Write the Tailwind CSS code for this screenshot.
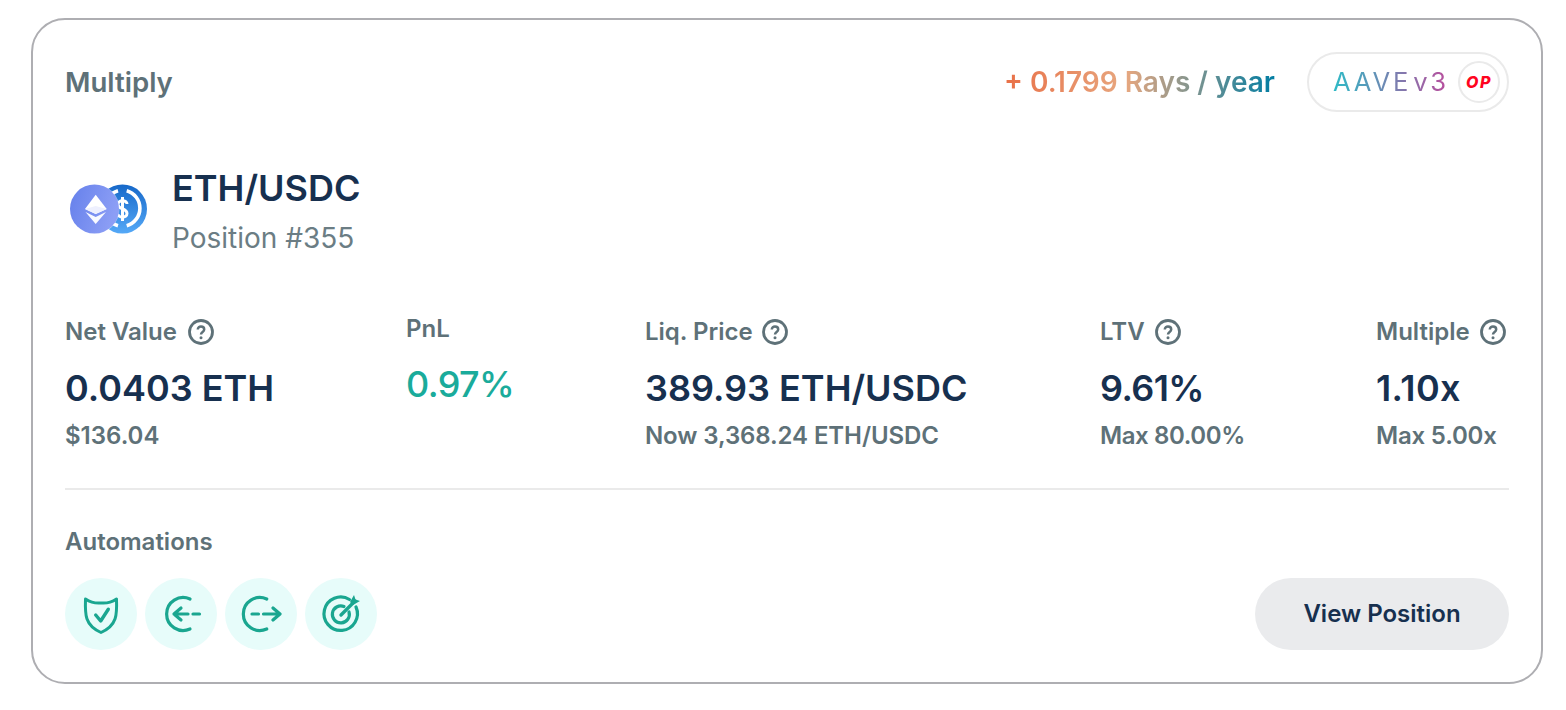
<!DOCTYPE html>
<html>
<head>
<meta charset="utf-8">
<script src="https://cdn.jsdelivr.net/npm/@tailwindcss/browser@4"></script>
</head>
<body class="bg-white font-['Inter',sans-serif]">
<div class="w-[1566px] h-[710px] pt-[18px] pl-[31px]">
  <div class="w-[1512px] h-[666px] rounded-[34px] border-2 border-[#aeaeb2] px-[32px] pt-[32px] text-[#5e7178] flex flex-col">
    <!-- header -->
    <div class="flex items-center justify-between h-[60px]">
      <div class="text-[27.600px] font-semibold mt-[2px]">Multiply</div>
      <div class="flex items-center">
        <div class="text-[28px] font-semibold text-transparent bg-clip-text bg-[linear-gradient(90deg,#e97047_0%,#e7a77f_45%,#007da3_100%)]">+ 0.1799 Rays / year</div>
        <div class="ml-[32px] w-[202px] h-[60px] rounded-full border-2 border-[#eaeaea] flex items-center pl-[24px]">
          <span class="w-[112px] text-[25.600px] leading-none font-normal tracking-[2.800px] [word-spacing:-8px] whitespace-nowrap text-transparent bg-clip-text bg-[linear-gradient(90deg,#2ebac6_0%,#b6509e_100%)]">AAVE v3</span>
          <div class="ml-[13px] w-[42px] h-[42px] rounded-full border-2 border-[#eaeaea] flex items-center justify-center text-[16px] font-extrabold italic tracking-[1.500px] text-[#ff0420]">OP</div>
        </div>
      </div>
    </div>
    <!-- token -->
    <div class="flex mt-[57px] h-[90px]">
      <svg class="w-[78px] h-[50px] ml-[5px] mt-[15px]" viewBox="0 0 78 50">
        <defs>
          <linearGradient id="u" x1="0" y1="0" x2="0" y2="1"><stop offset="0" stop-color="#1668c9"/><stop offset="1" stop-color="#55a9f7"/></linearGradient>
          <linearGradient id="e" x1="0" y1="0" x2="1" y2="0.3"><stop offset="0" stop-color="#6580eb"/><stop offset="1" stop-color="#8c9ef5"/></linearGradient>
        </defs>
        <circle cx="52.500" cy="25" r="24.500" fill="url(#u)"/>
        <path d="M56.700 6.700A18.200 18.200 0 0 1 56.700 41.700" fill="none" stroke="#fff" stroke-width="3.600"/>
        <path d="M48 6.700A18.200 18.200 0 0 0 48 41.700" fill="none" stroke="#fff" stroke-width="3.600"/>
        <path d="M57 20C57 15.500 48 15.500 48 20.500C48 25.500 57 24 57 29.500C57 34.500 48 34 48 30M52.500 13V37" fill="none" stroke="#fff" stroke-width="3"/>
        <circle cx="24.500" cy="25" r="25" fill="#fff" fill-opacity="0.500"/>
        <circle cx="24.500" cy="25" r="24.500" fill="url(#e)"/>
        <path d="M25.700 10.700L15 25L25.700 30L36.700 25Z" fill="#fff"/>
        <path d="M15.500 28L25.700 33L36 28L25.700 40Z" fill="#fff" fill-opacity="0.950"/>
        <path d="M25.700 22L15 25L25.700 30L36.700 25Z" fill="#eef0fe"/>
      </svg>
      <div class="ml-[24px]">
        <div class="text-[36px] leading-[44px] mt-[-3px] font-semibold text-[#17304f]">ETH/USDC</div>
        <div class="text-[28px] leading-[36px] mt-[10px] text-[#6b7d84]">Position #355</div>
      </div>
    </div>
    <!-- stats -->
    <div class="grid grid-cols-[341px_239px_455px_276px_auto] mt-[59px] h-[132px]">
      <div>
        <div class="flex items-center h-[28px] text-[24px] font-semibold">Net Value<svg class="w-[26px] h-[26px] ml-[11px]" viewBox="0 0 26 26" fill="none" stroke="#5e7178"><circle cx="13" cy="13" r="11.500" stroke-width="2.800"/><path d="M9.800 10.500C9.800 6.500 16.200 6.800 16.200 10.500C16.200 13 13 13 13 15.500" stroke-width="2.500"/><circle cx="13" cy="18.800" r="1.500" fill="#5e7178" stroke="none"/></svg></div>
        <div class="text-[36px] leading-[44px] mt-[20px] font-semibold text-[#17304f]">0.0403 ETH</div>
        <div class="text-[24px] leading-[28px] mt-[12px] font-semibold">$136.04</div>
      </div>
      <div class="mt-[-3px]">
        <div class="h-[28px] flex items-center text-[24px] font-semibold">PnL</div>
        <div class="text-[36px] leading-[44px] mt-[19px] font-medium tracking-[-0.600px] text-[#1aab9b]">0.97%</div>
      </div>
      <div>
        <div class="flex items-center h-[28px] text-[24px] font-semibold">Liq. Price<svg class="w-[26px] h-[26px] ml-[9px]" viewBox="0 0 26 26" fill="none" stroke="#5e7178"><circle cx="13" cy="13" r="11.500" stroke-width="2.800"/><path d="M9.800 10.500C9.800 6.500 16.200 6.800 16.200 10.500C16.200 13 13 13 13 15.500" stroke-width="2.500"/><circle cx="13" cy="18.800" r="1.500" fill="#5e7178" stroke="none"/></svg></div>
        <div class="text-[36px] leading-[44px] mt-[20px] font-semibold text-[#17304f]">389.93 ETH/USDC</div>
        <div class="text-[24px] leading-[28px] mt-[12px] font-semibold tracking-[-0.100px]">Now 3,368.24 ETH/USDC</div>
      </div>
      <div>
        <div class="flex items-center h-[28px] text-[24px] font-semibold">LTV<svg class="w-[26px] h-[26px] ml-[10px]" viewBox="0 0 26 26" fill="none" stroke="#5e7178"><circle cx="13" cy="13" r="11.500" stroke-width="2.800"/><path d="M9.800 10.500C9.800 6.500 16.200 6.800 16.200 10.500C16.200 13 13 13 13 15.500" stroke-width="2.500"/><circle cx="13" cy="18.800" r="1.500" fill="#5e7178" stroke="none"/></svg></div>
        <div class="text-[36px] leading-[44px] mt-[20px] font-semibold tracking-[-0.600px] text-[#17304f]">9.61%</div>
        <div class="text-[24px] leading-[28px] mt-[12px] font-semibold tracking-[-0.400px]">Max 80.00%</div>
      </div>
      <div>
        <div class="flex items-center h-[28px] text-[24px] font-semibold">Multiple<svg class="w-[26px] h-[26px] ml-[10px]" viewBox="0 0 26 26" fill="none" stroke="#5e7178"><circle cx="13" cy="13" r="11.500" stroke-width="2.800"/><path d="M9.800 10.500C9.800 6.500 16.200 6.800 16.200 10.500C16.200 13 13 13 13 15.500" stroke-width="2.500"/><circle cx="13" cy="18.800" r="1.500" fill="#5e7178" stroke="none"/></svg></div>
        <div class="text-[36px] leading-[44px] mt-[20px] font-semibold tracking-[0.400px] text-[#17304f]">1.10x</div>
        <div class="text-[24px] leading-[28px] mt-[12px] font-semibold tracking-[-0.200px]">Max 5.00x</div>
      </div>
    </div>
    <div class="h-[2px] bg-[#eaeaea] mt-[38px]"></div>
    <!-- automations -->
    <div class="text-[24px] leading-[28px] font-semibold mt-[38px]">Automations</div>
    <div class="flex justify-between items-center mt-[22px]">
      <div class="flex gap-[8px]">
        <div class="w-[72px] h-[72px] rounded-full bg-[#e7fcfa]">
          <svg class="w-[72px] h-[72px]" viewBox="0 0 72 72" fill="none" stroke="#1aa690" stroke-width="3" stroke-linecap="round" stroke-linejoin="round"><path d="M20.500 21C25 24 31 25.500 36 25C41 25.500 47 24 51.500 21C52 36 52.500 47 36 54.500C19.500 47 20 36 20.500 21Z"/><path d="M30.700 37L35.700 43L43.300 31.300" stroke-width="3.400"/></svg>
        </div>
        <div class="w-[72px] h-[72px] rounded-full bg-[#e7fcfa]">
          <svg class="w-[72px] h-[72px]" viewBox="0 0 72 72" fill="none" stroke="#1aa690" stroke-width="3.200" stroke-linecap="round" stroke-linejoin="round"><path d="M45 21A16.500 16.500 0 1 0 45 51"/><path d="M36 30L29 36L36 42M29 36H43M48 36H54.500"/></svg>
        </div>
        <div class="w-[72px] h-[72px] rounded-full bg-[#e7fcfa]">
          <svg class="w-[72px] h-[72px]" viewBox="0 0 72 72" fill="none" stroke="#1aa690" stroke-width="3.200" stroke-linecap="round" stroke-linejoin="round"><path d="M41.700 21A16.500 16.500 0 1 0 41.700 51"/><path d="M27 36H33.500M38.500 36H54.500M48 30L55 36L48 42"/></svg>
        </div>
        <div class="w-[72px] h-[72px] rounded-full bg-[#e7fcfa]">
          <svg class="w-[72px] h-[72px]" viewBox="0 0 72 72" fill="none" stroke="#1aa690" stroke-width="3.200" stroke-linecap="round"><path d="M44.500 21.500A16.700 16.700 0 1 0 51 29"/><path d="M39 28.500A8.500 8.500 0 1 0 44 34"/><path d="M36 37L50 23" stroke-width="3.400"/><path d="M49 17L50.500 21.500L55 23L48 27L45 24Z" fill="#1aa690" stroke="none"/></svg>
        </div>
      </div>
      <div class="w-[254px] h-[72px] rounded-full bg-[#eaebed] flex items-center justify-center text-[24px] font-semibold text-[#17304f]">View Position</div>
    </div>
  </div>
</div>
</body>
</html>
